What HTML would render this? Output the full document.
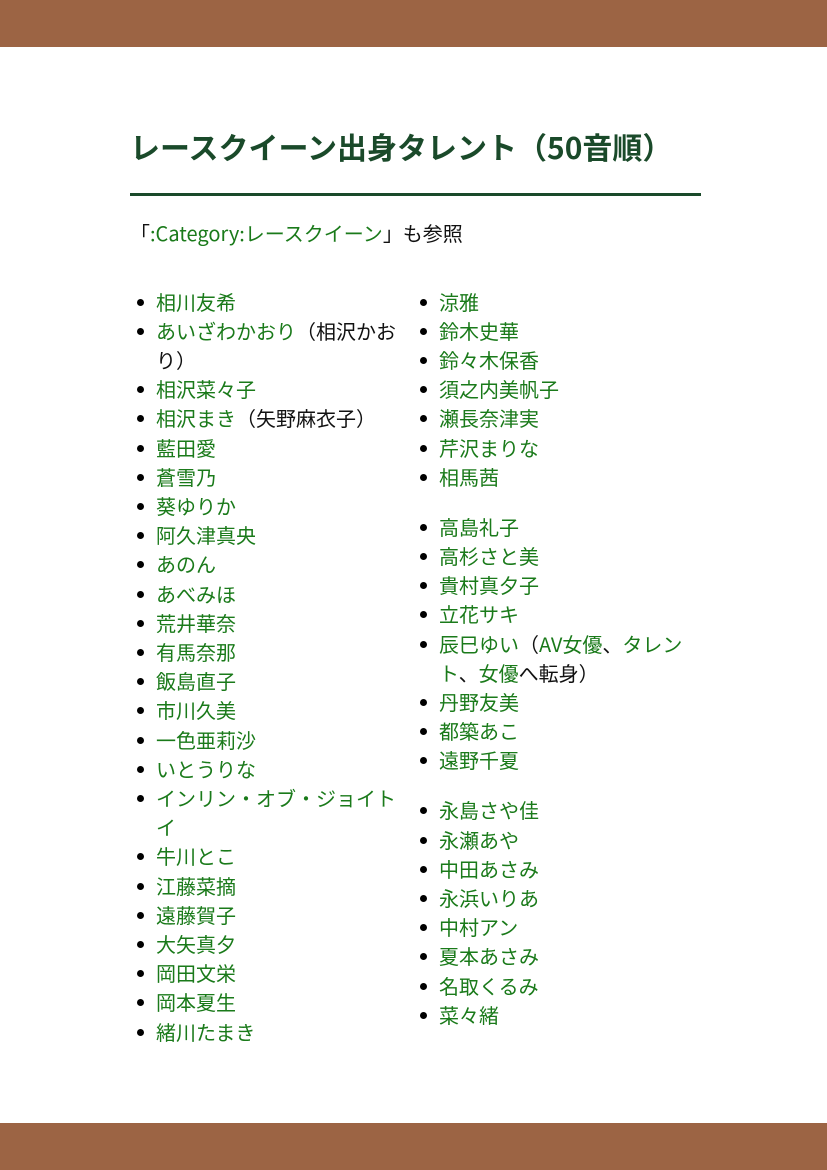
<!DOCTYPE html>
<html><head><meta charset="utf-8"><style>
*{margin:0;padding:0;box-sizing:border-box}
body{width:827px;height:1170px;background:#fff;position:relative;font-family:"Noto Sans CJK JP","Liberation Sans",sans-serif;overflow:hidden}
.bar{position:absolute;left:0;width:827px;height:47px;background:#9c6444}
h1{position:absolute;left:130px;top:125px;font-size:30px;line-height:42px;color:#1a4a2a;font-weight:bold;white-space:nowrap}
.rule{position:absolute;left:130px;top:193px;width:571px;height:3px;background:#1a4a2a}
.see{position:absolute;left:130px;top:218px;font-size:20px;line-height:29px;color:#111}
a{color:#1a7a1a;text-decoration:none}
ul{position:absolute;list-style:none;font-size:20px;line-height:29.2px;color:#111}
li{position:relative;padding-left:26px;width:272px}
li:before{content:"";position:absolute;left:7px;top:12px;width:7px;height:7px;border-radius:50%;background:#000}
.g{margin-top:20.8px}
</style></head><body>
<div class="bar" style="top:0"></div>
<div class="bar" style="top:1123px"></div>
<h1>レースクイーン出身タレント（50音順）</h1>
<div class="rule"></div>
<div class="see">「<a>:Category:レースクイーン</a>」も参照</div>
<ul style="left:130px;top:286.5px">
<li><a>相川友希</a></li>
<li><a>あいざわかおり</a>（相沢かおり）</li>
<li><a>相沢菜々子</a></li>
<li><a>相沢まき</a>（矢野麻衣子）</li>
<li><a>藍田愛</a></li>
<li><a>蒼雪乃</a></li>
<li><a>葵ゆりか</a></li>
<li><a>阿久津真央</a></li>
<li><a>あのん</a></li>
<li><a>あべみほ</a></li>
<li><a>荒井華奈</a></li>
<li><a>有馬奈那</a></li>
<li><a>飯島直子</a></li>
<li><a>市川久美</a></li>
<li><a>一色亜莉沙</a></li>
<li><a>いとうりな</a></li>
<li><a>インリン・オブ・ジョイトイ</a></li>
<li><a>牛川とこ</a></li>
<li><a>江藤菜摘</a></li>
<li><a>遠藤賀子</a></li>
<li><a>大矢真夕</a></li>
<li><a>岡田文栄</a></li>
<li><a>岡本夏生</a></li>
<li><a>緒川たまき</a></li>
</ul>
<ul style="left:413px;top:286.5px">
<li><a>涼雅</a></li>
<li><a>鈴木史華</a></li>
<li><a>鈴々木保香</a></li>
<li><a>須之内美帆子</a></li>
<li><a>瀬長奈津実</a></li>
<li><a>芹沢まりな</a></li>
<li><a>相馬茜</a></li>
<li class="g"><a>高島礼子</a></li>
<li><a>高杉さと美</a></li>
<li><a>貴村真夕子</a></li>
<li><a>立花サキ</a></li>
<li><a>辰巳ゆい</a>（<a>AV女優</a>、<a>タレント</a>、<a>女優</a>へ転身）</li>
<li><a>丹野友美</a></li>
<li><a>都築あこ</a></li>
<li><a>遠野千夏</a></li>
<li class="g"><a>永島さや佳</a></li>
<li><a>永瀬あや</a></li>
<li><a>中田あさみ</a></li>
<li><a>永浜いりあ</a></li>
<li><a>中村アン</a></li>
<li><a>夏本あさみ</a></li>
<li><a>名取くるみ</a></li>
<li><a>菜々緒</a></li>
</ul>
</body></html>
